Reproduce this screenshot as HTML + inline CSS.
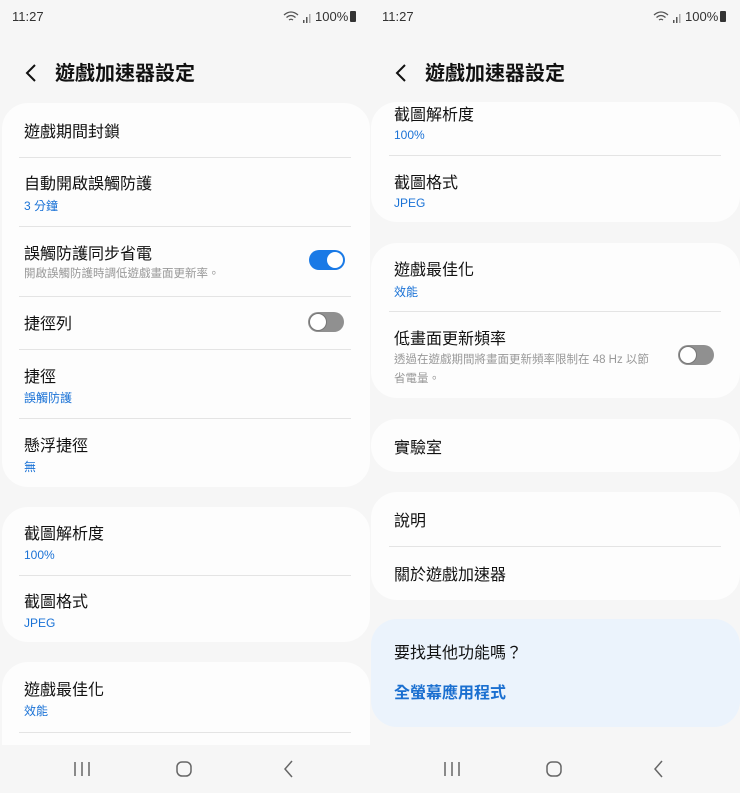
<!DOCTYPE html>
<html><head><meta charset="utf-8"><style>
*{margin:0;padding:0;box-sizing:border-box}
body{width:740px;height:793px;background:#f6f6f6;position:relative;overflow:hidden;font-family:"Liberation Sans","Noto Sans CJK TC",sans-serif;color:#111}
.a{position:absolute;white-space:nowrap}
.card{position:absolute;background:#fdfdfd;border-radius:26px}
.t{position:absolute;font-size:16px;line-height:20px;color:#111;margin-top:2px}
.s{position:absolute;font-size:12px;line-height:16px;color:#1a72d6;margin-top:2px}
.d{position:absolute;font-size:12px;line-height:16px;color:#999;margin-top:2px}
.hr{position:absolute;height:1px;background:#e4e4e4}
.st{position:absolute;font-size:13px;line-height:16px;color:#333;top:9px}
.hd{position:absolute;font-size:20px;font-weight:bold;line-height:24px;top:62px}
.tg{position:absolute;width:36px;height:20px;border-radius:10px}
.tg i{position:absolute;top:2px;width:16px;height:16px;border-radius:50%;background:#fff}
</style></head><body>
<!-- status bars -->
<div class="st" style="left:12px">11:27</div>
<svg class="a" style="left:283px;top:10px" width="30" height="14"><path d="M1 5Q8-1 15 5M3.5 7.5Q8 3.5 12.5 7.5M6 10Q8 8.5 10 10" fill="none" stroke="#555" stroke-width="1.3"/><rect x="20" y="10" width="1.5" height="3" fill="#555"/><rect x="23" y="7" width="1.5" height="6" fill="#555"/><rect x="26" y="4" width="1.5" height="9" fill="#aaa"/></svg>
<div class="st" style="left:315px">100%</div>
<div class="a" style="left:350px;top:11px;width:6px;height:11px;background:#333;border-radius:1px"></div>
<div class="st" style="left:382px">11:27</div>
<svg class="a" style="left:653px;top:10px" width="30" height="14"><path d="M1 5Q8-1 15 5M3.5 7.5Q8 3.5 12.5 7.5M6 10Q8 8.5 10 10" fill="none" stroke="#555" stroke-width="1.3"/><rect x="20" y="10" width="1.5" height="3" fill="#555"/><rect x="23" y="7" width="1.5" height="6" fill="#555"/><rect x="26" y="4" width="1.5" height="9" fill="#aaa"/></svg>
<div class="st" style="left:685px">100%</div>
<div class="a" style="left:720px;top:11px;width:6px;height:11px;background:#333;border-radius:1px"></div>
<!-- headers -->
<svg class="a" style="left:24px;top:63px" width="14" height="20"><path d="M11 2 L3 10 L11 18" fill="none" stroke="#111" stroke-width="2"/></svg>
<div class="hd" style="left:55px">遊戲加速器設定</div>
<svg class="a" style="left:394px;top:63px" width="14" height="20"><path d="M11 2 L3 10 L11 18" fill="none" stroke="#111" stroke-width="2"/></svg>
<div class="hd" style="left:425px">遊戲加速器設定</div>

<!-- LEFT -->
<div class="card" style="left:2px;top:103px;width:368px;height:384px"></div>
<div class="t" style="left:24px;top:121px">遊戲期間封鎖</div>
<div class="hr" style="left:19px;top:157px;width:332px"></div>
<div class="t" style="left:24px;top:173px">自動開啟誤觸防護</div>
<div class="s" style="left:24px;top:196px">3 分鐘</div>
<div class="hr" style="left:19px;top:226px;width:332px"></div>
<div class="t" style="left:24px;top:243px">誤觸防護同步省電</div>
<div class="d" style="left:24px;top:264px;font-size:11.5px">開啟誤觸防護時調低遊戲畫面更新率。</div>
<div class="tg" style="left:309px;top:250px;background:#1a7ae6"><i style="left:18px"></i></div>
<div class="hr" style="left:19px;top:296px;width:332px"></div>
<div class="t" style="left:24px;top:313px">捷徑列</div>
<div class="tg" style="left:308px;top:312px;background:#909090"><i style="left:1px;top:1px;width:18px;height:18px;border:1.5px solid #777"></i></div>
<div class="hr" style="left:19px;top:349px;width:332px"></div>
<div class="t" style="left:24px;top:366px">捷徑</div>
<div class="s" style="left:24px;top:388px">誤觸防護</div>
<div class="hr" style="left:19px;top:418px;width:332px"></div>
<div class="t" style="left:24px;top:435px">懸浮捷徑</div>
<div class="s" style="left:24px;top:457px">無</div>

<div class="card" style="left:2px;top:507px;width:368px;height:135px"></div>
<div class="t" style="left:24px;top:523px">截圖解析度</div>
<div class="s" style="left:24px;top:545px">100%</div>
<div class="hr" style="left:19px;top:575px;width:332px"></div>
<div class="t" style="left:24px;top:591px">截圖格式</div>
<div class="s" style="left:24px;top:613px">JPEG</div>

<div class="card" style="left:2px;top:662px;width:368px;height:110px"></div>
<div class="t" style="left:24px;top:679px">遊戲最佳化</div>
<div class="s" style="left:24px;top:701px">效能</div>
<div class="hr" style="left:19px;top:732px;width:332px"></div>

<!-- RIGHT -->
<div class="card" style="left:371px;top:102px;width:369px;height:120px"></div>
<div class="t" style="left:394px;top:104px">截圖解析度</div>
<div class="s" style="left:394px;top:125px">100%</div>
<div class="hr" style="left:389px;top:155px;width:332px"></div>
<div class="t" style="left:394px;top:172px">截圖格式</div>
<div class="s" style="left:394px;top:193px">JPEG</div>

<div class="card" style="left:371px;top:243px;width:369px;height:155px"></div>
<div class="t" style="left:394px;top:259px">遊戲最佳化</div>
<div class="s" style="left:394px;top:282px">效能</div>
<div class="hr" style="left:389px;top:311px;width:332px"></div>
<div class="t" style="left:394px;top:328px">低畫面更新頻率</div>
<div class="d" style="left:394px;top:350px;font-size:11.5px">透過在遊戲期間將畫面更新頻率限制在 48 Hz 以節</div>
<div class="d" style="left:394px;top:369px;font-size:11.5px">省電量。</div>
<div class="tg" style="left:678px;top:345px;background:#909090"><i style="left:1px;top:1px;width:18px;height:18px;border:1.5px solid #777"></i></div>

<div class="card" style="left:371px;top:419px;width:369px;height:53px"></div>
<div class="t" style="left:394px;top:437px">實驗室</div>

<div class="card" style="left:371px;top:492px;width:369px;height:108px"></div>
<div class="t" style="left:394px;top:510px">說明</div>
<div class="hr" style="left:389px;top:546px;width:332px"></div>
<div class="t" style="left:394px;top:564px">關於遊戲加速器</div>

<div class="card" style="left:371px;top:619px;width:369px;height:108px;background:#ebf3fc"></div>
<div class="t" style="left:394px;top:642px">要找其他功能嗎？</div>
<div class="t" style="left:394px;top:682px;color:#1a6fd0;font-weight:bold">全螢幕應用程式</div>

<!-- nav bars -->
<div class="a" style="left:0;top:745px;width:740px;height:48px;background:#f6f6f6"></div>
<svg class="a" style="left:73px;top:761px" width="18" height="16"><path d="M2 1V15M9 1V15M16 1V15" stroke="#666" stroke-width="1.5"/></svg>
<svg class="a" style="left:176px;top:761px" width="16" height="16"><rect x="1" y="1" width="14" height="14" rx="5" fill="none" stroke="#666" stroke-width="1.5"/></svg>
<svg class="a" style="left:283px;top:760px" width="12" height="18"><path d="M9 1L2 9L9 17" fill="none" stroke="#666" stroke-width="1.5"/></svg>
<svg class="a" style="left:443px;top:761px" width="18" height="16"><path d="M2 1V15M9 1V15M16 1V15" stroke="#666" stroke-width="1.5"/></svg>
<svg class="a" style="left:546px;top:761px" width="16" height="16"><rect x="1" y="1" width="14" height="14" rx="5" fill="none" stroke="#666" stroke-width="1.5"/></svg>
<svg class="a" style="left:653px;top:760px" width="12" height="18"><path d="M9 1L2 9L9 17" fill="none" stroke="#666" stroke-width="1.5"/></svg>
</body></html>
